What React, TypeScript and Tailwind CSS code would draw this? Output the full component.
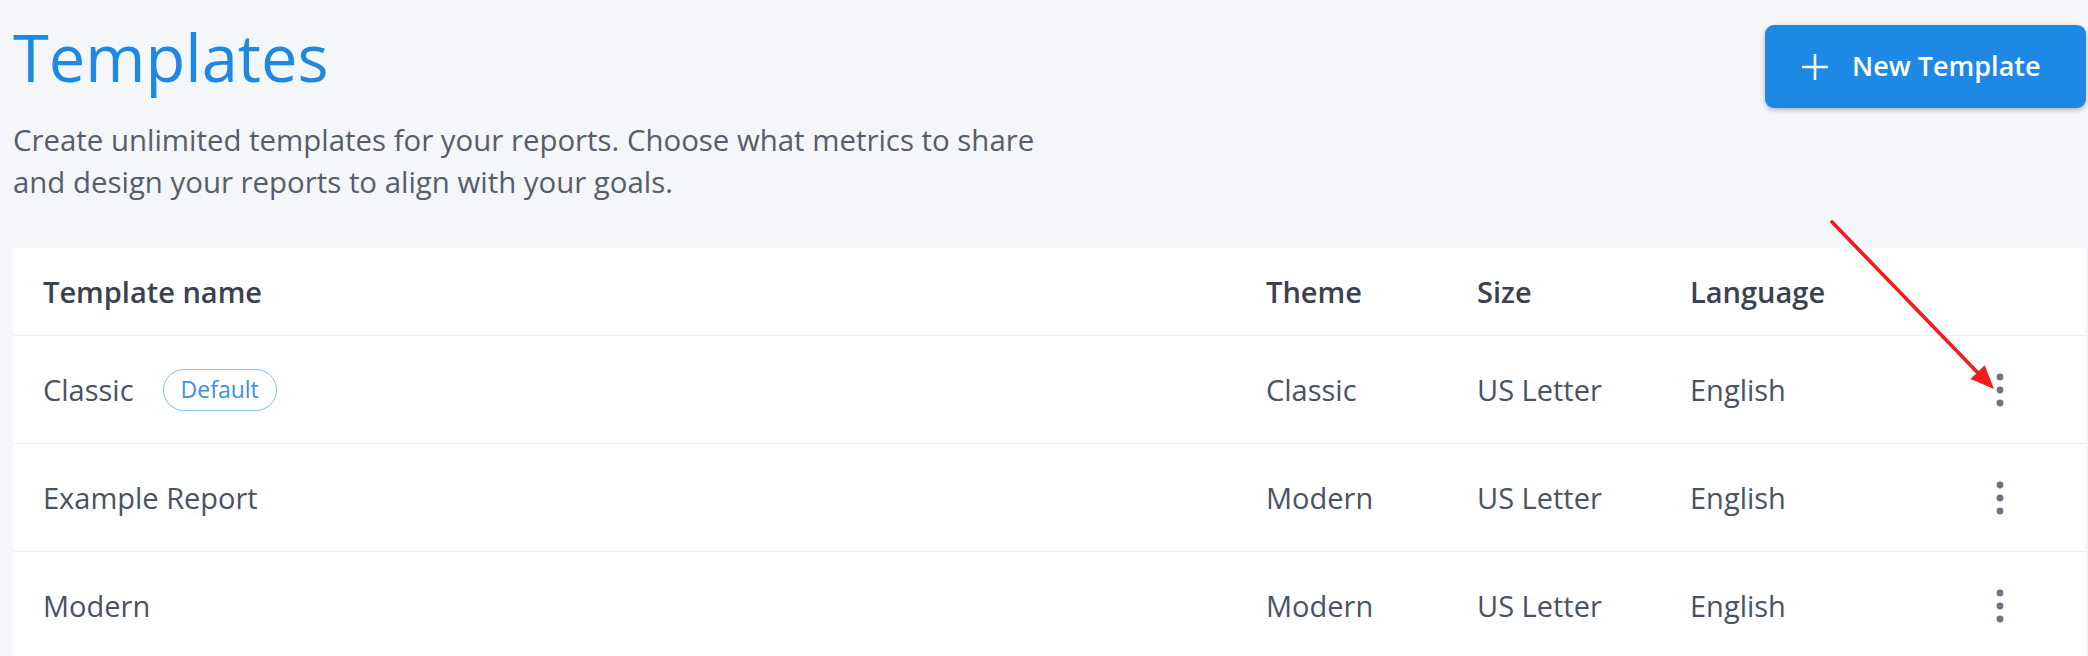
import React from 'react';

interface TemplateRow {
  name: string;
  isDefault?: boolean;
  theme: string;
  size: string;
  language: string;
}

const ROWS: TemplateRow[] = [
  { name: 'Classic', isDefault: true, theme: 'Classic', size: 'US Letter', language: 'English' },
  { name: 'Example Report', theme: 'Modern', size: 'US Letter', language: 'English' },
  { name: 'Modern', theme: 'Modern', size: 'US Letter', language: 'English' },
];

const GRID = 'grid grid-cols-[1223px_211px_213px_290px_40px] items-center pl-[30px]';

function Kebab() {
  return (
    <svg width="8" height="34" viewBox="0 0 8 34" className="mx-auto">
      <circle cx="4" cy="4" r="3.4" fill="#6b7280" />
      <circle cx="4" cy="17" r="3.4" fill="#6b7280" />
      <circle cx="4" cy="30" r="3.4" fill="#6b7280" />
    </svg>
  );
}

export default function App() {
  return (
    <div className="relative min-h-screen bg-[#f4f6f9] pl-[13px] pr-[2px] font-['Open_Sans',sans-serif]">
      {/* Page header */}
      <div className="flex items-start justify-between pt-[17px]">
        <div>
          <h1 className="text-[65px] leading-[80px] font-medium text-[#1e88e5]">Templates</h1>
          <p className="mt-[22px] text-[29.4px] leading-[42px] text-[#575d6a]">
            Create unlimited templates for your reports. Choose what metrics to share
            <br />
            and design your reports to align with your goals.
          </p>
        </div>
        <button className="mt-[8px] flex h-[83px] w-[321px] items-center rounded-[9px] bg-[#1e88e5] pl-[37px] text-white shadow-[0_2px_5px_rgba(0,0,0,0.28)]">
          <svg width="26" height="26" viewBox="0 0 26 26">
            <path d="M13 1v24M1 13h24" stroke="white" strokeWidth="2.6" strokeLinecap="round" />
          </svg>
          <span className="ml-[24px] text-[27px] font-semibold">New Template</span>
        </button>
      </div>

      {/* Table */}
      <div className="mt-[45px] bg-white">
        <div className={`${GRID} h-[88px] border-b border-[#eef1f4] text-[29px] font-semibold text-[#3b4150]`}>
          <div>Template name</div>
          <div>Theme</div>
          <div>Size</div>
          <div>Language</div>
          <div />
        </div>
        {ROWS.map((row) => (
          <div
            key={row.name}
            className={`${GRID} h-[108px] border-b border-[#eef1f4] text-[29px] text-[#4b5262]`}
          >
            <div className="flex items-center">
              <span>{row.name}</span>
              {row.isDefault && (
                <span className="ml-[29px] flex h-[42px] items-center rounded-full border-[1.5px] border-[#8cc0ef] px-[17px] text-[23px] text-[#3d8fe0]">
                  Default
                </span>
              )}
            </div>
            <div>{row.theme}</div>
            <div>{row.size}</div>
            <div>{row.language}</div>
            <div>
              <Kebab />
            </div>
          </div>
        ))}
      </div>

      {/* Annotation arrow */}
      <svg
        className="pointer-events-none absolute left-[1820px] top-[210px]"
        width="180"
        height="185"
        viewBox="0 0 180 185"
      >
        <path d="M12 12L160 165" stroke="#f21c1c" strokeWidth="3.6" strokeLinecap="round" />
        <path d="M174 179L150.5 169L164.7 155.2Z" fill="#f21c1c" />
      </svg>
    </div>
  );
}
